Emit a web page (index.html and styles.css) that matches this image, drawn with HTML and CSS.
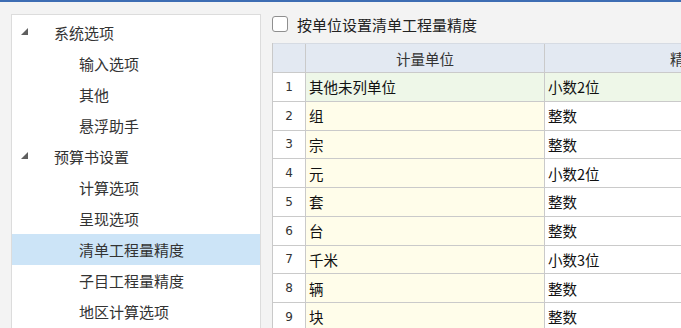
FILE: index.html
```html
<!DOCTYPE html>
<html lang="zh-CN">
    <head>
        <meta charset="UTF-8" />
        <title>选项</title>
        <link rel="stylesheet" href="styles.css">
    </head>
    <body>
        <div class="page">
            <!-- 左侧树 -->
            <div class="tree">
                <div class="node lv1">
                    <svg class="arrow" width="7" height="7" viewBox="0 0 7 7"><polygon points="7,0 7,7 0,7" /></svg>
                    系统选项
                </div>
                <div class="node lv2">输入选项</div>
                <div class="node lv2">其他</div>
                <div class="node lv2">悬浮助手</div>
                <div class="node lv1">
                    <svg class="arrow" width="7" height="7" viewBox="0 0 7 7"><polygon points="7,0 7,7 0,7" /></svg>
                    预算书设置
                </div>
                <div class="node lv2">计算选项</div>
                <div class="node lv2">呈现选项</div>
                <div class="node lv2 active">清单工程量精度</div>
                <div class="node lv2">子目工程量精度</div>
                <div class="node lv2">地区计算选项</div>
            </div>

            <!-- 右侧内容 -->
            <div class="content">
                <label class="check_row">
                    <span class="check_box"></span>
                    按单位设置清单工程量精度
                </label>

                <div class="grid">
                    <div class="row head">
                        <div class="cell num"></div>
                        <div class="cell unit">计量单位</div>
                        <div class="cell prec">精度</div>
                    </div>
                    <div class="row current">
                        <div class="cell num">1</div>
                        <div class="cell unit">其他未列单位</div>
                        <div class="cell prec">小数2位</div>
                    </div>
                    <div class="row">
                        <div class="cell num">2</div>
                        <div class="cell unit">组</div>
                        <div class="cell prec">整数</div>
                    </div>
                    <div class="row">
                        <div class="cell num">3</div>
                        <div class="cell unit">宗</div>
                        <div class="cell prec">整数</div>
                    </div>
                    <div class="row">
                        <div class="cell num">4</div>
                        <div class="cell unit">元</div>
                        <div class="cell prec">小数2位</div>
                    </div>
                    <div class="row">
                        <div class="cell num">5</div>
                        <div class="cell unit">套</div>
                        <div class="cell prec">整数</div>
                    </div>
                    <div class="row">
                        <div class="cell num">6</div>
                        <div class="cell unit">台</div>
                        <div class="cell prec">整数</div>
                    </div>
                    <div class="row">
                        <div class="cell num">7</div>
                        <div class="cell unit">千米</div>
                        <div class="cell prec">小数3位</div>
                    </div>
                    <div class="row">
                        <div class="cell num">8</div>
                        <div class="cell unit">辆</div>
                        <div class="cell prec">整数</div>
                    </div>
                    <div class="row">
                        <div class="cell num">9</div>
                        <div class="cell unit">块</div>
                        <div class="cell prec">整数</div>
                    </div>
                </div>
            </div>
        </div>
    </body>
</html>
```

FILE: styles.css
```css
* {
    margin: 0px;
    padding: 0px;
    box-sizing: border-box;
}

html,
body {
    height: 100%;
    overflow: hidden;
}

body {
    background-color: #f3f3f3;
    border-top: 2px solid #3d6db3;
    font-family: "Noto Sans CJK SC", "Microsoft YaHei", sans-serif;
    font-size: 15px;
    color: #333;
}

.page {
    display: flex;
    height: 100%;
    padding: 12px 0px 0px 11px;
}

/* 左侧树 */
.tree {
    width: 250px;
    flex-shrink: 0;
    background-color: #fff;
    border: 1px solid #dcdcdc;
    border-bottom: none;
    padding-top: 1px;
}

.node {
    height: 31px;
    line-height: 31px;
    display: flex;
    align-items: center;
    white-space: nowrap;
    cursor: default;
}
.node:first-child {
    margin-top: 1px;
}
.lv1 {
    padding-left: 9px;
}
.lv2 {
    padding-left: 67px;
}
.arrow {
    fill: #5f5f5f;
    margin-right: 26px;
    margin-top: -3px;
}
.active {
    background-color: #cce4f7;
}

/* 右侧 */
.content {
    flex: 1;
    padding-left: 11px;
    min-width: 0;
    overflow: hidden;
}

.check_row {
    display: flex;
    align-items: center;
    height: 20px;
    gap: 9px;
    color: #222;
}
.check_box {
    width: 16px;
    height: 16px;
    border: 1px solid #8f8f8f;
    border-radius: 3px;
    background-color: #fff;
}

.grid {
    margin-top: 9px;
    width: 560px;
    border-left: 1px solid #c9c9c9;
    font-size: 14.5px;
    color: #111;
}

.row {
    display: flex;
    height: 28.75px;
    border-bottom: 1px solid #cacaca;
}
.row.head {
    height: 30px;
    background-color: #e3e9f2;
    border-top: 1px solid #d6dbe3;
    color: #333;
}

.cell {
    display: flex;
    align-items: center;
    padding-left: 3px;
    border-right: 1px solid #cacaca;
    white-space: nowrap;
}
.num {
    width: 33px;
    justify-content: center;
    padding-left: 0px;
    font-family: "DejaVu Sans", sans-serif;
    font-size: 12px;
    color: #333;
    background-color: #fff;
}
.unit {
    width: 239px;
    background-color: #fffdea;
}
.prec {
    width: 280px;
    background-color: #fff;
}

.head .cell {
    background-color: #e3e9f2;
    justify-content: center;
    padding-left: 0px;
}

.current .unit,
.current .prec {
    background-color: #eef7e8;
}
```
